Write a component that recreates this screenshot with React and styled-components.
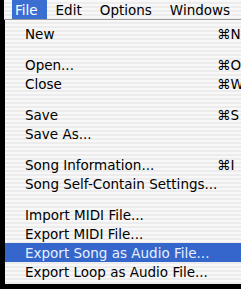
import React from "react";
import styled, { createGlobalStyle } from "styled-components";

const Global = createGlobalStyle`
  html, body { margin: 0; padding: 0; background: #000; }
  body { width: 241px; height: 289px; overflow: hidden; }
`;

const stripes = `repeating-linear-gradient(to bottom, #f8f8f8 0px, #f8f8f8 2px, #ececec 2px, #ececec 4px)`;

const Screen = styled.div`
  width: 241px;
  height: 289px;
  background: #000;
  font-family: "DejaVu Sans", "Lucida Grande", sans-serif;
  font-size: 13.5px;
  color: #000;
  display: flex;
  flex-direction: column;
  overflow: hidden;
`;

const MenuBar = styled.div`
  height: 19px;
  margin-left: 4px;
  background: ${stripes};
  border-bottom: 1px solid #9a9a9a;
  display: flex;
  align-items: stretch;
  padding-left: 8px;
`;

const BarItem = styled.div`
  display: flex;
  align-items: center;
  padding: 0 9px 0 ${(p) => (p.$first ? "3px" : "9px")};
  background: ${(p) => (p.$active ? "#3a6fd1" : "transparent")};
  color: ${(p) => (p.$active ? "#fff" : "#000")};
  font-size: 13.5px;
`;

const Menu = styled.div`
  margin-left: 5px;
  width: 236px;
  background: ${stripes};
  padding: 4px 0 3px 0;
  display: flex;
  flex-direction: column;
`;

const Row = styled.div`
  height: 19px;
  display: flex;
  align-items: center;
  padding-left: 20px;
  background: ${(p) => (p.$active ? "#3566cb" : "transparent")};
  color: ${(p) => (p.$active ? "#e8f0ff" : "#000")};
  white-space: nowrap;
`;

const Label = styled.span`
  flex: 1;
`;

const Shortcut = styled.span`
  width: 24px;
`;

const Separator = styled.div`
  height: 12px;
`;

const menuItems = [
  ["New", "⌘N"],
  "-",
  ["Open...", "⌘O"],
  ["Close", "⌘W"],
  "-",
  ["Save", "⌘S"],
  ["Save As..."],
  "-",
  ["Song Information...", "⌘I"],
  ["Song Self-Contain Settings..."],
  "-",
  ["Import MIDI File..."],
  ["Export MIDI File..."],
  ["Export Song as Audio File...", null, true],
  ["Export Loop as Audio File..."],
];

export default function App() {
  return (
    <>
      <Global />
      <Screen>
        <MenuBar>
          <BarItem $active $first>File</BarItem>
          <BarItem>Edit</BarItem>
          <BarItem>Options</BarItem>
          <BarItem>Windows</BarItem>
        </MenuBar>
        <Menu>
          {menuItems.map((it, i) =>
            it === "-" ? (
              <Separator key={i} />
            ) : (
              <Row key={i} $active={it[2]}>
                <Label>{it[0]}</Label>
                {it[1] && <Shortcut>{it[1]}</Shortcut>}
              </Row>
            )
          )}
        </Menu>
      </Screen>
    </>
  );
}
